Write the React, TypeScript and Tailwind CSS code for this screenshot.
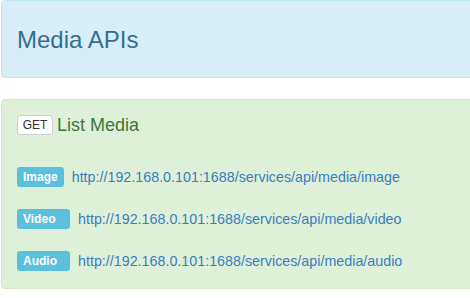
import React from "react";

const rows = [
  { name: "Image", url: "http://192.168.0.101:1688/services/api/media/image", w: "" },
  { name: "Video", url: "http://192.168.0.101:1688/services/api/media/video", w: "w-[53px]" },
  { name: "Audio", url: "http://192.168.0.101:1688/services/api/media/audio", w: "w-[53px]" },
];

export default function App() {
  return (
    <div
      className="w-[470px] h-[298px] overflow-hidden bg-white"
      style={{ fontFamily: '"Liberation Sans", Arial, sans-serif' }}
    >
      <div className="ml-[1px] w-[490px] h-[78px] border border-[#bce8f1] bg-[#d9edf7] rounded-[4px] pl-[15px] pt-[26px]">
        <h3 className="text-[24px] leading-[26px] text-[#31708f] font-normal">Media APIs</h3>
      </div>
      <div className="ml-[1px] mt-[21px] w-[490px] h-[190px] border border-[#d6e9c6] bg-[#dff0d8] rounded-[4px] pl-[15px] pt-[15px]">
        <div className="flex items-center h-[20px]">
          <span className="w-[36px] h-[20px] flex items-center justify-center bg-white border border-[#ccc] rounded-[3px] text-[12px] leading-none text-[#333]">
            GET
          </span>
          <span className="ml-[4px] text-[18px] leading-[20px] text-[#3c763d]">List Media</span>
        </div>
        <div className="mt-[32px] flex flex-col gap-[22px]">
          {rows.map((r) => (
            <div key={r.name} className="flex items-center h-[20px]">
              <span
                className={`${r.w} h-[20px] px-[6px] flex items-center bg-[#5bc0de] text-white text-[12px] font-bold leading-none rounded-[3px]`}
              >
                {r.name}
              </span>
              <a className="ml-[8px] text-[14.3px] leading-[20px] text-[#3a7dbf]" href="#">
                {r.url}
              </a>
            </div>
          ))}
        </div>
      </div>
    </div>
  );
}
